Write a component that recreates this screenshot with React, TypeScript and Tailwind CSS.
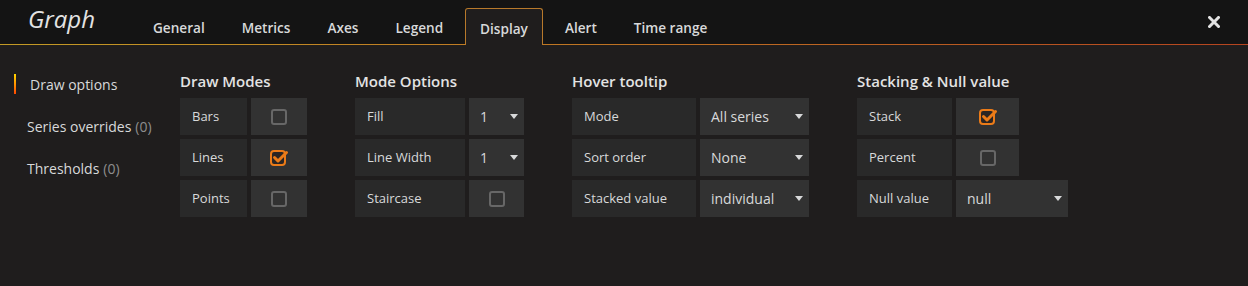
import React from 'react';

const tabs = ['General', 'Metrics', 'Axes', 'Legend', 'Display', 'Alert', 'Time range'];

const Checkbox = ({ checked }: { checked?: boolean }) =>
  checked ? (
    <svg width="20" height="20" viewBox="0 0 20 20">
      <rect x="2" y="3" width="14" height="14" rx="3" fill="#2b2523" stroke="#eb7b18" strokeWidth="2" />
      <path d="M5.5 9.5 L9 13 L17.5 4.5" fill="none" stroke="#eb7b18" strokeWidth="3" strokeLinecap="round" strokeLinejoin="round" />
    </svg>
  ) : (
    <span className="block w-[16px] h-[16px] rounded-[3px] border-2 border-[#676767]"></span>
  );

const Caret = () => (
  <svg width="8" height="5" viewBox="0 0 8 5" className="shrink-0">
    <path d="M0 0 L8 0 L4 5 Z" fill="#d8d9da" />
  </svg>
);

interface RowProps {
  label: string;
  labelW: string;
  valueW: string;
  check?: boolean;
  checked?: boolean;
  value?: string;
}

const Row = ({ label, labelW, valueW, check, checked, value }: RowProps) => (
  <div className="flex gap-[4px] h-[37px]">
    <div className={`${labelW} bg-[#292929] flex items-center pl-[12px] text-[13px] text-[#d8d9da]`}>
      {label}
    </div>
    {check ? (
      <div className={`${valueW} bg-[#323232] flex items-center justify-center`}>
        <Checkbox checked={checked} />
      </div>
    ) : (
      <div className={`${valueW} bg-[#323232] flex items-center justify-between pl-[11px] pr-[6px] text-[14px] text-[#d8d9da]`}>
        <span>{value}</span>
        <Caret />
      </div>
    )}
  </div>
);

const Section = ({ title, children }: { title: string; children: React.ReactNode }) => (
  <div className="flex flex-col">
    <h3 className="text-[15px] leading-[22px] font-semibold text-[#e3e3e3] mb-[6px]">{title}</h3>
    <div className="flex flex-col gap-[4px]">{children}</div>
  </div>
);

export default function App() {
  return (
    <div
      className="w-[1248px] h-[286px] bg-[#1f1d1d] overflow-hidden"
      style={{ fontFamily: '"Open Sans", "Liberation Sans", sans-serif' }}
    >
      {/* header */}
      <div className="bg-[#141414]">
        <div className="flex h-[44px] items-end">
          <div className="w-[138px] pl-[28px] self-center text-[24px] italic text-[#e3e3e3] leading-none pb-[6px]">
            Graph
          </div>
          <ul className="flex gap-[7px] items-end">
            {tabs.map((t) => {
              const active = t === 'Display';
              return (
                <li
                  key={t}
                  className={`h-[36px] px-[14px] pt-[4px] flex items-center text-[13.6px] font-semibold text-[#d8d9da] border border-b-0 rounded-t-[3px] ${
                    active ? 'bg-[#1f1d1d] border-[#b7792b] relative z-10 -mb-px h-[37px]' : 'border-transparent'
                  }`}
                >
                  {t}
                </li>
              );
            })}
          </ul>
          <div className="ml-auto mr-[28px] self-center">
            <svg width="12" height="12" viewBox="0 0 12 12">
              <path d="M1.5 1.5 L10.5 10.5 M10.5 1.5 L1.5 10.5" stroke="#e3e3e3" strokeWidth="3" strokeLinecap="square" />
            </svg>
          </div>
        </div>
        <div className="h-px bg-gradient-to-r from-[#c29a25] to-[#b5441f]"></div>
      </div>

      {/* body */}
      <div className="flex pt-[18px]">
        <ul className="w-[180px] shrink-0 pl-[14px] text-[14px] text-[#d8d9da]">
          <li className="h-[42px] flex items-center">
            <span className="w-[2px] h-[20px] bg-gradient-to-b from-[#ffd500] to-[#ff4400]"></span>
            <span className="ml-[14px]">Draw options</span>
          </li>
          <li className="h-[42px] flex items-center pl-[13px]">
            Series overrides<span className="ml-[4px] text-[#8e8e8e]">(0)</span>
          </li>
          <li className="h-[42px] flex items-center pl-[13px]">
            Thresholds<span className="ml-[4px] text-[#8e8e8e]">(0)</span>
          </li>
        </ul>

        <div className="flex gap-[48px] pt-[7px]">
          <Section title="Draw Modes">
            <Row label="Bars" labelW="w-[67px]" valueW="w-[56px]" check />
            <Row label="Lines" labelW="w-[67px]" valueW="w-[56px]" check checked />
            <Row label="Points" labelW="w-[67px]" valueW="w-[56px]" check />
          </Section>
          <Section title="Mode Options">
            <Row label="Fill" labelW="w-[110px]" valueW="w-[55px]" value="1" />
            <Row label="Line Width" labelW="w-[110px]" valueW="w-[55px]" value="1" />
            <Row label="Staircase" labelW="w-[110px]" valueW="w-[55px]" check />
          </Section>
          <Section title="Hover tooltip">
            <Row label="Mode" labelW="w-[124px]" valueW="w-[109px]" value="All series" />
            <Row label="Sort order" labelW="w-[124px]" valueW="w-[109px]" value="None" />
            <Row label="Stacked value" labelW="w-[124px]" valueW="w-[109px]" value="individual" />
          </Section>
          <Section title="Stacking & Null value">
            <Row label="Stack" labelW="w-[95px]" valueW="w-[63px]" check checked />
            <Row label="Percent" labelW="w-[95px]" valueW="w-[63px]" check />
            <Row label="Null value" labelW="w-[95px]" valueW="w-[112px]" value="null" />
          </Section>
        </div>
      </div>
    </div>
  );
}
